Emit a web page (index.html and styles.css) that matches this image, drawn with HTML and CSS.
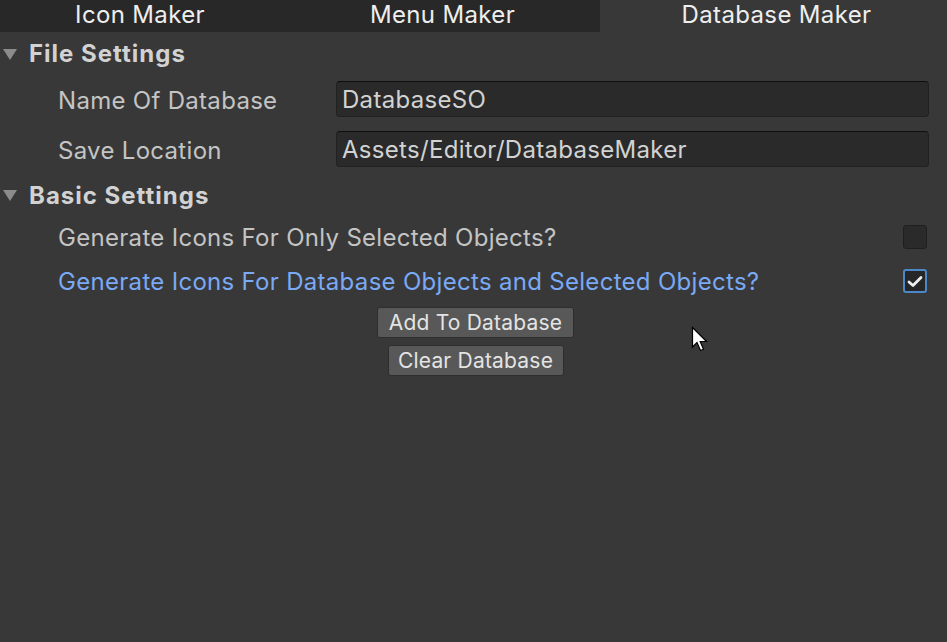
FILE: index.html
```html
<!DOCTYPE html>
<html>
<head>
<meta charset="utf-8">
<link rel="stylesheet" href="styles.css">
</head>
<body>
<div class="tabs">
  <div class="tab tab-icon">Icon Maker</div>
  <div class="tab tab-menu">Menu Maker</div>
  <div class="tab tab-db active">Database Maker</div>
</div>
<div class="content">
  <div class="foldout foldout-file">
    <span class="arrow"></span>
    <span class="foldout-title">File Settings</span>
  </div>
  <div class="field-row">
    <span class="label">Name Of Database</span>
    <div class="input">DatabaseSO</div>
  </div>
  <div class="field-row">
    <span class="label">Save Location</span>
    <div class="input">Assets/Editor/DatabaseMaker</div>
  </div>
  <div class="foldout foldout-basic">
    <span class="arrow"></span>
    <span class="foldout-title">Basic Settings</span>
  </div>
  <div class="toggle-row">
    <span class="label">Generate Icons For Only Selected Objects?</span>
    <span class="checkbox"></span>
  </div>
  <div class="toggle-row focused">
    <span class="label">Generate Icons For Database Objects and Selected Objects?</span>
    <span class="checkbox checked">
      <svg width="16" height="13" viewBox="0 0 16 13"><path d="M2 7 L6 10.5 L14 2.5" fill="none" stroke="#eeeeee" stroke-width="2.8" stroke-linecap="round" stroke-linejoin="round"/></svg>
    </span>
  </div>
  <div class="buttons">
    <div class="btn btn-add">Add To Database</div>
    <div class="btn btn-clear">Clear Database</div>
  </div>
</div>
<svg class="cursor" width="20" height="28" viewBox="0 0 20 28"><path d="M1.5 1.5 L1.5 21 L6 16.5 L9.5 24.5 L12.5 23.2 L9.2 15.5 L15.5 15.5 Z" fill="#ffffff" stroke="#000000" stroke-width="1.2" stroke-linejoin="miter"/></svg>
</body>
</html>
```
FILE: styles.css
```css
html, body {
  margin: 0;
  padding: 0;
  background: #383838;
  font-family: Inter, "Noto Sans", sans-serif;
  color: #c4c4c4;
  width: 947px;
  height: 642px;
  overflow: hidden;
}
body { position: relative; }

.tabs {
  display: grid;
  grid-template-columns: 280px 320px 1fr;
  height: 32px;
  background: #282828;
}
.tab {
  display: flex;
  align-items: center;
  justify-content: center;
  font-size: 24px;
  letter-spacing: 0.35px;
  color: #eeeeee;
  line-height: 1;
  padding-bottom: 2px;
}
.tab-menu { padding-left: 5px; }
.tab-db { padding-left: 6px; }
.tab.active { background: #383838; }

.content { display: flex; flex-direction: column; }

.foldout {
  display: flex;
  align-items: center;
  padding-left: 3px;
}
.foldout-file { height: 43px; }
.foldout-basic { height: 40px; }
.arrow {
  width: 0; height: 0;
  border-left: 7px solid transparent;
  border-right: 7px solid transparent;
  border-top: 11px solid #8b8b8b;
  margin-right: 12px;
  margin-top: 1px;
}
.foldout-title {
  font-size: 24px;
  letter-spacing: 1px;
  font-weight: 700;
  color: #d2d2d2;
}

.field-row {
  display: flex;
  align-items: center;
  height: 50px;
  padding-left: 58px;
  padding-right: 18px;
}
.label {
  font-size: 24px;
  letter-spacing: 0.3px;
  color: #c4c4c4;
}
.field-row .label { width: 278px; flex: none; }
.input {
  flex: 1;
  height: 36px;
  box-sizing: border-box;
  background: #2a2a2a;
  border: 1px solid #212121;
  border-top-color: #0f0f0f;
  border-radius: 4px;
  font-size: 24px;
  letter-spacing: 0.3px;
  color: #d2d2d2;
  display: flex;
  align-items: center;
  padding-left: 5px;
  margin-top: -2px;
}

.toggle-row {
  display: flex;
  align-items: center;
  justify-content: space-between;
  height: 44px;
  padding-left: 58px;
  padding-right: 20px;
}
.toggle-row.focused .label { color: #7aa9f5; }
.checkbox {
  width: 24px;
  height: 24px;
  box-sizing: border-box;
  background: #2a2a2a;
  border: 1px solid #1f1f1f;
  border-radius: 3px;
  display: flex;
  align-items: center;
  justify-content: center;
}
.checkbox.checked {
  border: 2px solid #4a88c8;
  background: #262626;
}

.buttons {
  display: flex;
  flex-direction: column;
  align-items: center;
  gap: 7px;
  margin-top: 4px;
  padding-left: 4px;
}
.btn {
  height: 31px;
  box-sizing: border-box;
  background: #585858;
  border: 1px solid #2e2e2e;
  border-radius: 3px;
  font-size: 21px;
  letter-spacing: 0.2px;
  color: #e4e4e4;
  display: flex;
  align-items: center;
  justify-content: center;
}
.btn-add { width: 197px; }
.btn-clear { width: 176px; }

.cursor {
  position: absolute;
  left: 691px;
  top: 326px;
}
```
